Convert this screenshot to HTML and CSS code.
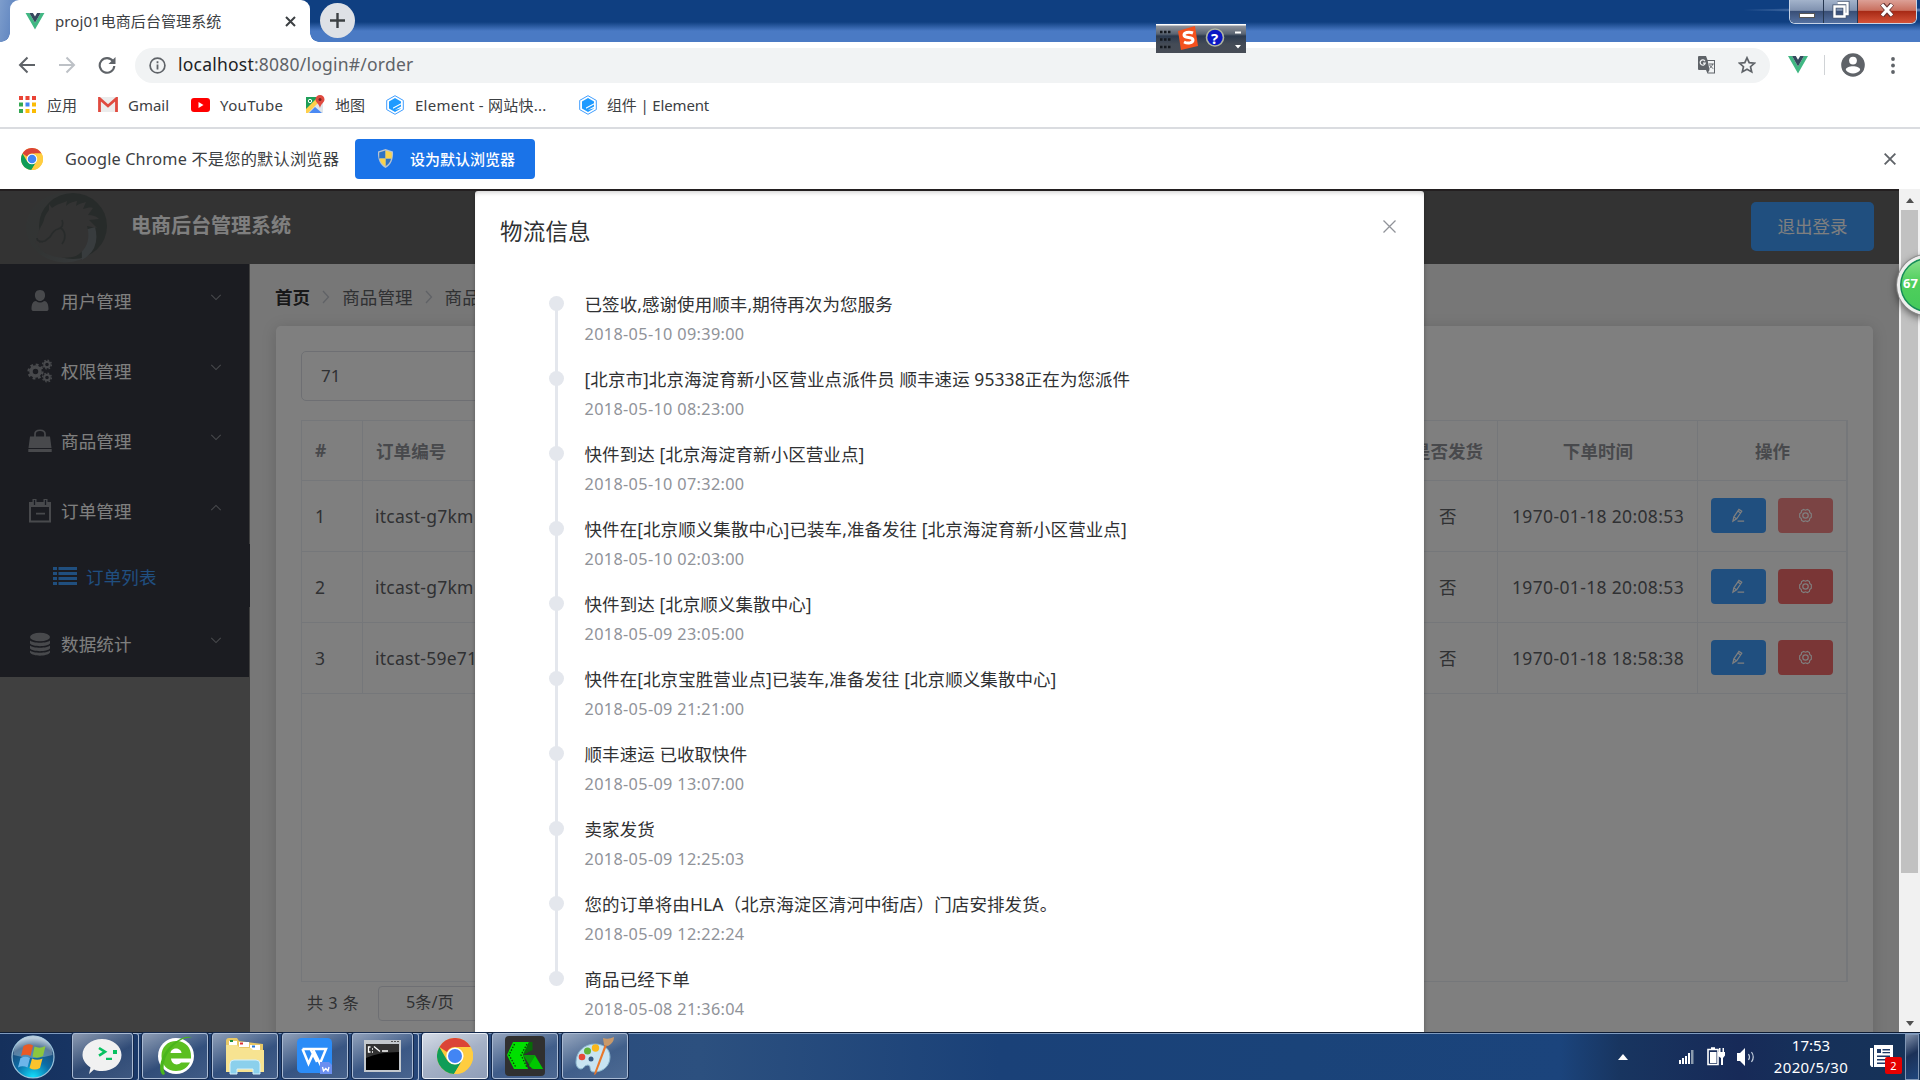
FILE: index.html
```html
<!DOCTYPE html>
<html lang="zh-CN">
<head>
<meta charset="utf-8">
<title>proj01电商后台管理系统</title>
<link rel="stylesheet" href="styles.css">
</head>
<body>
<svg class="defs" aria-hidden="true">
  <defs>
    <symbol id="vue" viewBox="0 0 20 18"><path d="M0 0h4l6 10.4L16 0h4L10 17.5z" fill="#41b883"/><path d="M4 0h3.8L10 3.8 12.2 0H16l-6 10.4z" fill="#35495e"/></symbol>
    <symbol id="chrome" viewBox="0 0 36 36">
      <circle cx="18" cy="18" r="18" fill="#fbc93d"/>
      <path d="M2.4 9A18 18 0 0 1 33.6 9H18a9 9 0 0 0-8 5z" fill="#db4437"/>
      <path d="M2.4 9A18 18 0 0 0 17 36l8-13.5a9 9 0 0 1-15.2-.8z" fill="#0f9d58"/>
      <path d="M33.6 9A18 18 0 0 1 17 36l8.3-13.2A9 9 0 0 0 22 9z" fill="#ffcd40"/>
      <circle cx="18" cy="18" r="8.6" fill="#fff"/><circle cx="18" cy="18" r="7" fill="#4285f4"/>
    </symbol>
    <symbol id="element" viewBox="0 0 18 20"><path d="M9 .7 17.3 5.400v9.200L9 19.300.7 14.600V5.400z" fill="none" stroke="#409eff" stroke-width="1"/><path d="M9 3 15 6.400v1.800L7 12.600v1.200l8-4.400v2l-6.200 3.500 6.200-1.600v.3L9 17 3 13.600V6.400z" fill="#1f9bff"/></symbol>
    <symbol id="down" viewBox="0 0 14 8"><path d="m1.500 1 5.500 5.500L12.500 1" fill="none" stroke="currentColor" stroke-width="1.200"/></symbol>
    <symbol id="right" viewBox="0 0 8 14"><path d="m1 1 5.500 6L1 13" fill="none" stroke="currentColor" stroke-width="1.300"/></symbol>
    <symbol id="edit" viewBox="0 0 16 16"><path d="m3 9.500 5.500-8 3 2-5.500 8L2 14z M7.300 3.300l3 2M3 9.500l3 2M7 14h7" fill="none" stroke="#fff" stroke-width="1.300"/></symbol>
    <symbol id="cog" viewBox="0 0 16 16"><path d="m6 1.500 2 .8 2-.8 2.200 1.300.3 2 1.700 1.400v3.600l-1.700 1.400-.3 2L10 14.500l-2-.8-2 .8-2.200-1.300-.3-2-1.700-1.400V6.200l1.700-1.400.3-2z" fill="none" stroke="#fff" stroke-width="1.200"/><circle cx="8" cy="8" r="2.900" fill="none" stroke="#fff" stroke-width="1.300"/></symbol>
  </defs>
</svg>

<header class="titlebar">
  <div class="tab">
    <svg width="20" height="17"><use href="#vue"/></svg>
    <span class="tab-title">proj01电商后台管理系统</span>
    <svg class="tab-close" width="11" height="11" viewBox="0 0 11 11"><path d="m1 1 9 9m0-9-9 9" stroke="#3c4043" stroke-width="2"/></svg>
  </div>
  <div class="newtab"><svg width="15" height="15" viewBox="0 0 15 15"><path d="M7.500 0v15M0 7.500h15" stroke="#3c4043" stroke-width="2.400"/></svg></div>
  <div class="winbtns">
    <div class="wb min"><i></i></div>
    <div class="wb"><svg width="18" height="18" viewBox="0 0 18 18"><path d="M5.500 2h10v11h-3M2.500 5.500h10v10h-10z" fill="none" stroke="#44546f" stroke-width="4"/><path d="M5.500 2h10v11h-3M2.500 5.500h10v10h-10z" fill="none" stroke="#fff" stroke-width="2.400"/></svg></div>
    <div class="wb close"><svg width="16" height="14" viewBox="0 0 16 14"><path d="m3 1 10 12M13 1 3 13" stroke="#633" stroke-width="5"/><path d="m3 1.500 10 11M13 1.500l-10 11" stroke="#fff" stroke-width="3.200"/></svg></div>
  </div>
</header>
<div class="ime">
  <svg width="90" height="34" viewBox="0 0 90 34"><g fill="none" stroke="#15191f" stroke-width="2.500" stroke-dasharray="2.500 1.500"><path d="M4 10h12M4 17.500h12M4 25h12"/></g><path d="m22 9 17-5 3 20-17 4z" fill="#f4511e"/><path d="M37 11c-5-2-9 0-9 2 0 4 9 1 9 5 0 3-5 4-9 2" fill="none" stroke="#fff" stroke-width="3"/><circle cx="59" cy="15.500" r="8.500" fill="#0b17c4" stroke="#aeb4a0" stroke-width="1.600"/><path d="M79 9.500h6v2h-6zM79 23h6l-3 3.500z" fill="#fff"/></svg><b>?</b>
</div>

<nav class="toolbar">
  <svg class="nav-ic" width="18" height="18" viewBox="0 0 18 18"><path d="M17 9H2m7.500-7.500L2 9l7.500 7.500" fill="none" stroke="#5f6368" stroke-width="2"/></svg>
  <svg class="nav-ic" width="18" height="18" viewBox="0 0 18 18"><path d="M1 9h15M8.500 1.500 16 9l-7.500 7.500" fill="none" stroke="#bdc1c6" stroke-width="2"/></svg>
  <svg class="nav-ic" width="18" height="18" viewBox="0 0 18 18"><path d="M15 5.200A7.300 7.300 0 1 0 16.300 10" fill="none" stroke="#5f6368" stroke-width="2.100"/><path d="M17.500 1v7h-7z" fill="#5f6368"/></svg>
  <div class="urlbar">
    <svg width="17" height="17" viewBox="0 0 17 17"><circle cx="8.500" cy="8.500" r="7.400" fill="none" stroke="#5f6368" stroke-width="1.700"/><path d="M8.500 7.500v5M8.500 4.300v1.900" stroke="#5f6368" stroke-width="1.800"/></svg>
    <span class="url"><b>localhost</b>:8080/login#/order</span>
    <svg class="translate" width="18" height="18" viewBox="0 0 18 18"><path d="M1 0h7l1.500 4H17v13.500h-7.500L8 14H1a1 1 0 0 1-1-1V1a1 1 0 0 1 1-1z" fill="#5f6368"/><path d="M9.800 5h6.200v11.500H10l1.500-2.500z" fill="#f1f3f4"/><path d="M7 5.200a2.600 2.600 0 1 0 .3 2H5" fill="none" stroke="#f1f3f4" stroke-width="1.200"/><path d="M10.800 8h5M14.500 8c0 2-2 3.500-3 4.200m.2-3.200c1 2 2.500 3 3.600 3.500" fill="none" stroke="#5f6368" stroke-width="1"/></svg>
    <svg width="18" height="18" viewBox="0 0 18 18"><path d="m9 1.800 2.200 4.900 5.300.5-4 3.500 1.200 5.200L9 13.200l-4.700 2.700 1.200-5.200-4-3.500 5.300-.5z" fill="none" stroke="#5f6368" stroke-width="1.700"/></svg>
  </div>
  <svg class="vue-ext" width="20" height="18"><use href="#vue"/></svg>
  <i class="vsep"></i>
  <svg class="person" width="24" height="24" viewBox="0 0 24 24"><circle cx="12" cy="12" r="11.800" fill="#5f6368"/><circle cx="12" cy="7.600" r="3.900" fill="#fff"/><path d="M4.800 17c0-5 14.400-5 14.400 0-3 4.500-11.400 4.500-14.400 0z" fill="#fff"/></svg>
  <svg width="4" height="17" viewBox="0 0 4 17"><g fill="#5f6368"><circle cx="2" cy="2" r="1.900"/><circle cx="2" cy="8.500" r="1.900"/><circle cx="2" cy="15" r="1.900"/></g></svg>
</nav>

<div class="bookmarks">
  <a class="bm w1"><svg width="17" height="17" viewBox="0 0 17 17"><path d="M0 0h4v4H0zM6.500 0h4v4h-4zM13 0h4v4h-4z" fill="#ea4335"/><path d="M0 6.500h4v4H0z" fill="#34a853"/><path d="M6.500 6.500h4v4h-4z" fill="#4285f4"/><path d="M13 6.500h4v4h-4zM6.500 13h4v4h-4zM13 13h4v4h-4z" fill="#fbbc04"/><path d="M0 13h4v4H0z" fill="#34a853"/></svg>应用</a>
  <a class="bm w2"><svg width="20" height="15" viewBox="0 0 20 15"><path d="M2 0h16v15H2z" fill="#ececec"/><path d="M1.500 15V1.500L10 9l8.500-7.500V15" fill="none" stroke="#e04a3f" stroke-width="2.800"/></svg>Gmail</a>
  <a class="bm w3"><svg width="19" height="14" viewBox="0 0 19 14"><rect width="19" height="14" rx="3" fill="#f00"/><path d="m7.500 4 5 3-5 3z" fill="#fff"/></svg>YouTube</a>
  <a class="bm w4"><svg width="19" height="19" viewBox="0 0 19 19"><path d="M0 2h17v16H0z" fill="#dfe5ea"/><path d="M0 2h13L0 15z" fill="#1e9e58"/><path d="m0 14 11-11 3 3L2 18H0z" fill="#ffd04b"/><path d="m3 18 6-6 7 6z" fill="#4a89f3"/><path d="M14 0a4.500 4.500 0 0 1 4.500 4.500c0 3-3.500 4-4.500 8.500-1-4.500-4.500-5.500-4.500-8.500A4.500 4.500 0 0 1 14 0z" fill="#e04a3f"/><circle cx="14" cy="4.500" r="1.500" fill="#7b231e"/><circle cx="4" cy="6" r="1.700" fill="none" stroke="#fff"/></svg>地图</a>
  <a class="bm w5"><svg width="18" height="20"><use href="#element"/></svg>Element - 网站快...</a>
  <a class="bm w6"><svg width="18" height="20"><use href="#element"/></svg>组件 | Element</a>
</div>

<div class="infobar">
  <svg width="22" height="22"><use href="#chrome"/></svg>
  <span class="info-text"><span>Google Chrome </span>不是您的默认浏览器</span>
  <button class="default-btn"><svg width="17" height="19" viewBox="0 0 17 19"><path d="M8.500 0 16 2.500C16.500 10 14 16 8.500 19 3 16 .5 10 1 2.500z" fill="#b9c4cf"/><path d="M8.500 1.500V9.500H2.200V3.500zM8.500 9.500h5.600c-.8 3.500-2.600 6-5.600 7.800z" fill="#2f73c4"/><path d="M8.500 1.500V9.500h6.200v-6zM8.500 9.500H2.600c.8 3.500 2.600 6 5.900 7.800z" fill="#f9d34c"/></svg>设为默认浏览器</button>
  <svg class="info-close" width="12" height="12" viewBox="0 0 11 11"><path d="m.6.600 9.800 9.800m0-9.800-9.800 9.800" stroke="#5f6368" stroke-width="1.700"/></svg>
</div>

<div class="viewport">
  <div class="page">
    <div class="app-head">
      <svg class="logo" width="84" height="72" viewBox="0 0 84 72"><defs><linearGradient id="lg" x1="0" x2="1" y1="0" y2="1"><stop offset="0" stop-color="#666a69"/><stop offset=".5" stop-color="#636968"/><stop offset="1" stop-color="#788086"/></linearGradient></defs><ellipse cx="40" cy="36.500" rx="39" ry="35" fill="url(#lg)" opacity=".75"/><ellipse cx="48" cy="35" rx="34" ry="33" fill="#4e5654"/><path d="M57 69Q76 58 70 36L56 40z" fill="#70787c"/><path d="M12 49c0-9 5-14 7-20 1-5 3-7 5-10l0-6 3 4c5-4 11-5 15-7l-1 5c4-4 7-4 11-5l-1 5c4-3 7-3 10-4l-3 7c4-1 7-2 10-1l-5 7c5 0 8 1 11 4l-10 1 8 8-10-2c4 14-1 24-11 30-12 4-34 1-38-12-2 1-4-1-1-4z" fill="#666"/><path d="M37 29c2 5 0 8-4 9s-6 4-8 8l-5 4-6 1M36 37c5 4 5 11 1 16M12 47c0 4 3 3 6 4" fill="none" stroke="#515756" stroke-width="1.700"/></svg>
      <h1>电商后台管理系统</h1>
      <button class="logout">退出登录</button>
    </div>
    <div class="app-body">
      <aside>
        <div class="menu">
          <div class="item"><svg width="26" height="24" viewBox="0 0 26 24"><path d="M13 1c4 0 5.300 3 5 6-.2 2.500-2 5-5 5s-4.800-2.500-5-5c-.3-3 1-6 5-6zM4.500 20c0-5 1.500-8 4.500-8 2.500 2 5.500 2 8 0 3 0 4.500 3 4.500 8 0 1.500-1 2-2 2h-13c-1 0-2-.5-2-2z" fill="#909399"/></svg><span>用户管理</span><svg class="arrow" width="12" height="7"><use href="#down"/></svg></div>
          <div class="item"><svg width="26" height="24" viewBox="0 0 26 24"><g fill="none" stroke="#909399"><circle cx="8.500" cy="12.500" r="4.500" stroke-width="3.500"/><circle cx="8.500" cy="12.500" r="7" stroke-width="2.200" stroke-dasharray="2.800 2.700"/><circle cx="20" cy="5.500" r="2.800" stroke-width="2"/><circle cx="20" cy="5.500" r="4.400" stroke-width="1.300" stroke-dasharray="1.700 1.750"/><circle cx="20" cy="18.500" r="2.800" stroke-width="2"/><circle cx="20" cy="18.500" r="4.400" stroke-width="1.300" stroke-dasharray="1.700 1.750"/></g></svg><span>权限管理</span><svg class="arrow" width="12" height="7"><use href="#down"/></svg></div>
          <div class="item"><svg width="26" height="24" viewBox="0 0 26 24"><path d="M3 7.500h20L24.500 19h-23zM1.300 20h23.400v3H1.300z" fill="#909399"/><path d="M8 11V5c0-5 10-5 10 0v6" fill="none" stroke="#909399" stroke-width="1.700"/></svg><span>商品管理</span><svg class="arrow" width="12" height="7"><use href="#down"/></svg></div>
          <div class="item"><svg width="26" height="24" viewBox="0 0 26 24"><path d="M3 4h20v18.500H3z" fill="none" stroke="#909399" stroke-width="2"/><path d="M2 4h22v4H2zM5.500 0h4v4h-4zM16.500 0h4v4h-4zM9 13.800h9v1.600H9z" fill="#909399"/><path d="M7.500 1v5M18.500 1v5" stroke="#333744" stroke-width="1.300"/></svg><span>订单管理</span><svg class="arrow up" width="12" height="7"><use href="#down"/></svg></div>
          <div class="item sub"><svg width="24" height="18" viewBox="0 0 24 18"><path d="M0 0h4v3H0zM0 5h4v3H0zM0 10h4v3H0zM0 15h4v3H0zM5.500 0H24v3H5.500zM5.500 5H24v3H5.500zM5.500 10H24v3H5.500zM5.500 15H24v3H5.500z" fill="#409eff"/></svg><span>订单列表</span></div>
          <div class="item"><svg width="26" height="24" viewBox="0 0 26 24"><g fill="#909399"><ellipse cx="13" cy="5" rx="10" ry="4.300"/><path d="M3 8.500c3 3 17 3 20 0v3c-3 3.500-17 3.500-20 0zM3 13.500c3 3 17 3 20 0v3c-3 3.500-17 3.500-20 0zM3 18.500c3 3 17 3 20 0v2c-3 4.200-17 4.200-20 0z"/></g></svg><span>数据统计</span><svg class="arrow" width="12" height="7"><use href="#down"/></svg></div>
        </div>
      </aside>
      <main>
        <div class="crumb"><b>首页</b><svg width="8" height="14"><use href="#right"/></svg><span>商品管理</span><svg width="8" height="14"><use href="#right"/></svg><span>商品</span></div>
        <div class="card">
          <div class="search">71</div>
          <div class="table-wrap">
            <table>
              <colgroup><col class="c-idx"><col><col class="c-sent"><col class="c-time"><col class="c-op"></colgroup>
              <tr><th class="l">#</th><th class="l">订单编号</th><th>是否发货</th><th>下单时间</th><th>操作</th></tr>
              <tr><td class="l">1</td><td class="l id">itcast-g7km</td><td>否</td><td>1970-01-18 20:08:53</td><td><div class="ops"><i class="btn"><svg width="15" height="15"><use href="#edit"/></svg></i><i class="btn red hover"><svg width="15" height="15"><use href="#cog"/></svg></i></div></td></tr>
              <tr><td class="l">2</td><td class="l id">itcast-g7km</td><td>否</td><td>1970-01-18 20:08:53</td><td><div class="ops"><i class="btn"><svg width="15" height="15"><use href="#edit"/></svg></i><i class="btn red"><svg width="15" height="15"><use href="#cog"/></svg></i></div></td></tr>
              <tr><td class="l">3</td><td class="l id">itcast-59e71</td><td>否</td><td>1970-01-18 18:58:38</td><td><div class="ops"><i class="btn"><svg width="15" height="15"><use href="#edit"/></svg></i><i class="btn red"><svg width="15" height="15"><use href="#cog"/></svg></i></div></td></tr>
            </table>
          </div>
          <div class="pager"><span>共 3 条</span><div class="size">5条/页</div></div>
        </div>
      </main>
    </div>
    <div class="mask">
      <section class="dialog">
        <div class="dlg-head"><h2>物流信息</h2><svg width="13" height="13" viewBox="0 0 13 13"><path d="m.5.500 12 12m0-12-12 12" stroke="#909399" stroke-width="1.300"/></svg></div>
        <ul class="timeline">
          <li><p>已签收,感谢使用顺丰,期待再次为您服务</p><time>2018-05-10 09:39:00</time></li>
          <li><p>[北京市]北京海淀育新小区营业点派件员 顺丰速运 95338正在为您派件</p><time>2018-05-10 08:23:00</time></li>
          <li><p>快件到达 [北京海淀育新小区营业点]</p><time>2018-05-10 07:32:00</time></li>
          <li><p>快件在[北京顺义集散中心]已装车,准备发往 [北京海淀育新小区营业点]</p><time>2018-05-10 02:03:00</time></li>
          <li><p>快件到达 [北京顺义集散中心]</p><time>2018-05-09 23:05:00</time></li>
          <li><p>快件在[北京宝胜营业点]已装车,准备发往 [北京顺义集散中心]</p><time>2018-05-09 21:21:00</time></li>
          <li><p>顺丰速运 已收取快件</p><time>2018-05-09 13:07:00</time></li>
          <li><p>卖家发货</p><time>2018-05-09 12:25:03</time></li>
          <li><p>您的订单将由HLA（北京海淀区清河中街店）门店安排发货。</p><time>2018-05-09 12:22:24</time></li>
          <li><p>商品已经下单</p><time>2018-05-08 21:36:04</time></li>
        </ul>
      </section>
    </div>
  </div>
  <div class="scrollbar"><i class="tri up"></i><i class="thumb"></i><i class="tri"></i></div>
  <div class="ball">67</div>
</div>

<footer class="taskbar">
  <div class="orb"><svg width="46" height="46" viewBox="0 0 46 46"><defs><radialGradient id="og" cx=".5" cy="1" r=".95"><stop offset="0" stop-color="#13e4ff"/><stop offset=".45" stop-color="#0b6ea8"/><stop offset=".8" stop-color="#1d4a78"/><stop offset="1" stop-color="#9fb9cf"/></radialGradient></defs><circle cx="23" cy="23" r="21" fill="url(#og)" stroke="#9cc5dd" stroke-width="1.200"/><path d="M3.500 21a19.500 19.500 0 0 1 39 0q-19 6-39 0z" fill="#fff" opacity=".28"/><path d="M13.500 12q5-3 9.500-.5L20.500 22q-5-2.500-9.500 0z" fill="#ea5a25"/><path d="M24.500 12.500q5 2.500 11-.500L33 22q-6 3-10.500.5z" fill="#8cc63f"/><path d="M10.500 24q5-2.500 9.500 0l-2.500 9.500q-5-2.500-9.500 0z" fill="#6cb5ea"/><path d="M22 24.500q5 2.500 10.500 0L30 34q-5.500 3-10.500 0z" fill="#fcc32c"/></svg></div>
  <div class="task multi"><svg width="40" height="38" viewBox="0 0 40 38"><path d="M20 2c11 0 19.500 7 19.500 16S31 34 20 34c-3 0-6-.5-8-1.500L7 37l1.500-6.500C4 27.500.5 23 .5 18 .5 9 9 2 20 2z" fill="#f1f1f1"/><path d="m17 11 6 3.800-6 3.800" fill="none" stroke="#07c160" stroke-width="2.600"/><path d="M24 20.800h6v2.200h-6zM31 13h4v4h-4z" fill="#07c160"/></svg></div>
  <div class="task"><svg width="38" height="40" viewBox="0 0 38 40"><circle cx="20" cy="20" r="18" fill="#fff"/><path d="M35 20.500c.5-8.500-5.500-15.500-14.500-15.500S5.500 11 5.500 20s6 15 14.500 15c6.500 0 11.500-3.300 14-8.500h-9c-4 4-9.500 1.500-10-4h20z" fill="#5bbf21"/><path d="M14.500 17h11c-.5-6-10.500-6-11 0z" fill="#fff"/><path d="M7 39C0 34 6 15 19 6 26 1 33-.5 36 1.500c-6-.5-11 1.500-16 6C10 16 5 29 9 38z" fill="#49b51c"/></svg></div>
  <div class="task"><svg width="40" height="38" viewBox="0 0 40 38"><path d="M1 4q0-3 3-3h8l2 3 24 3v27H1z" fill="#e8c866"/><path d="M4 4h8v5H4zM14 5h10v5H14zM25 8h10v6H25z" fill="#fff"/><path d="M5 3h3v2H5z" fill="#1c8d3b"/><path d="M15 5.500h3v2h-3z" fill="#d33"/><path d="M27 8.500h3v2h-3z" fill="#2277d8"/><path d="M1 8h11l3 3h11l2 2h11v22H1z" fill="#f7e391"/><path d="M5 37V27q0-4 4-4h22q4 0 4 4v10h-7v-5H12v5z" fill="#8bd0ec" stroke="#d5f0fa" stroke-width="1"/></svg></div>
  <div class="task"><svg width="36" height="38" viewBox="0 0 36 38"><rect y="1" width="35" height="35" rx="4.500" fill="#2b8cf7"/><path d="M5.500 12H29L23 26.500l-6-12-5.500 12L5.500 12m8 0L20 25" fill="none" stroke="#fff" stroke-width="2.500"/><path d="M23 25h9l3 3v9H23z" fill="#6b8ff0"/><path d="m25.500 30 1 4 2.300-2.500L31 34l1-4" fill="none" stroke="#fff" stroke-width="1.300"/></svg></div>
  <div class="task multi"><svg width="37" height="32" viewBox="0 0 37 32"><path d="M0 0h37v32H0z" fill="#c3c8cd"/><path d="M2 4h33v26H2z" fill="#000"/><path d="M2 4h33v8Q14 12 2 18z" fill="#333"/><path d="M18 11h6M10 6.500l6 5M8 9h1M8 12h1M6.500 7H4.500v5h2" fill="none" stroke="#fff" stroke-width="1.300"/><path d="M27 1h2v1h-2zM30 1h2v1h-2zM33 1h2v1h-2z" fill="#555"/></svg></div>
  <div class="task active"><svg width="36" height="36"><use href="#chrome"/></svg></div>
  <div class="task"><svg width="40" height="40" viewBox="0 0 40 40"><rect width="40" height="40" rx="4" fill="#303030"/><path d="m8 6 16 0-6 13 5 14H9L2 19z" fill="#00e000"/><path d="M24 6h3.500v8L18 19z" fill="#076c07"/><path d="m18 19 12 0 8 14H27z" fill="#0a9a0a"/><path d="m30 20 8 13h-9l-5-3z" fill="#00c800"/><path d="M9.500 8 4 19l7 12.500M22 8l-6 11 6 12.500" fill="none" stroke="#063e06" stroke-width="1.300" stroke-dasharray="1.500 1.500"/></svg></div>
  <div class="task"><svg width="40" height="38" viewBox="0 0 40 38"><path d="M1 25C1 14 10 7 20 7c9 0 15 5 15 13 0 9-7 15-16 15-6 0-2-6-6-7-4 0-4 4-7 4-3 0-5-3-5-7z" fill="#c8e4f2" stroke="#88b4cc"/><circle cx="7" cy="20" r="3.300" fill="#e5493a"/><circle cx="12.500" cy="14" r="3.500" fill="#5fb23a"/><circle cx="20.500" cy="11" r="3.700" fill="#fbb71b"/><circle cx="16" cy="22" r="2.500" fill="#365983"/><path d="M32 8 21 37l-2 1 1-4L30 7z" fill="#e8772a"/><path d="M28 1q5 2 11-1 0 6-6 9l-4-1z" fill="#c8996a"/></svg></div>
  <div class="tray">
    <svg class="caret" width="10" height="6" viewBox="0 0 10 6"><path d="M0 6 5 0l5 6z" fill="#fff"/></svg>
    <svg class="sig" width="16" height="14" viewBox="0 0 16 14"><path d="M0 10h2v4H0zM3 8h2v6H3zM6 6h2v8H6zM9 3h2v11H9z" fill="#fff"/><path d="M12 0h2.500v14H12z" fill="#8b9aad"/></svg>
    <svg class="bat" width="19" height="19" viewBox="0 0 19 19"><path d="M1 2.500h10v15H1zM4 1h4" fill="none" stroke="#fff" stroke-width="1.600"/><path d="M3 5h6.500v11H3zM11 5h7v3.500l-2 2.500v7h-2v-7l-3-2zM12 1h1.500v4H12zM15.500 1H17v4h-1.500z" fill="#fff"/></svg>
    <svg class="vol" width="19" height="18" viewBox="0 0 19 18"><path d="M0 5h3l5-5v18l-5-5H0z" fill="#fff"/><path d="M11.500 6q2 3 0 6M14.500 4q3.500 5 0 10" fill="none" stroke="#c5d0df" stroke-width="1.200"/></svg>
    <div class="clock"><span>17:53</span><span class="date">2020/5/30</span></div>
    <div class="news"><svg width="24" height="23" viewBox="0 0 24 23"><path d="M4 0h19v22H4zM0 3h3v19H1.500L0 20z" fill="#fff"/><path d="M7 4h4v4H7zM12.500 4H20v1.500h-7.500zM12.500 7H20v1.200h-7.500zM7 10.500h13V12H7zM7 14h13v1.500H7zM7 17.500h13V19H7z" fill="#1e3a68"/></svg><b>2</b></div>
    <div class="peek"></div>
  </div>
</footer>
</body>
</html>
```
FILE: styles.css
```css
* { box-sizing: border-box; }
body {
  margin: 0; width: 1920px; height: 1080px; overflow: hidden; position: relative;
  display: flex; flex-direction: column; background: #fff;
  font-family: "Noto Sans", "Noto Sans CJK SC", sans-serif; font-size: 17.5px; color: #303133;
}
svg { flex: none; display: block; }
h1, h2, p, ul { margin: 0; padding: 0; }
button { border: 0; font-family: inherit; }
.defs { position: absolute; width: 0; height: 0; }

/* browser window */
.titlebar {
  height: 42px; flex: none; display: flex; position: relative; padding-left: 10px;
  background: linear-gradient(100deg, #7d9dcc 0, #5d83bf 20px, transparent 60px), radial-gradient(ellipse at 1870px 10px, #8eaad4 0, transparent 130px), linear-gradient(#0f3f81 0, #0f3f81 22px, #4a7ac4 31px, #4a7ac4);
}
.tab { width: 300px; height: 42px; background: #fff; border-radius: 9px 9px 0 0; display: flex; align-items: center; padding: 0 14px 0 15px; position: relative; }
.tab::before, .tab::after { content: ""; position: absolute; bottom: 0; width: 9px; height: 9px; }
.tab::before { left: -9px; background: radial-gradient(circle at 0 0, transparent 8.500px, #fff 9px); }
.tab::after { right: -9px; background: radial-gradient(circle at 100% 0, transparent 8.500px, #fff 9px); }
.tab-title { margin-left: 10px; padding-bottom: 2px; font-size: 15px; letter-spacing: .08px; color: #3c4043; flex: 1; white-space: nowrap; }
.newtab { width: 35px; height: 35px; border-radius: 50%; background: #dee1e6; margin: 3px 0 0 10px; display: flex; align-items: center; justify-content: center; }
.winbtns { display: flex; margin-left: auto; margin-right: 3px; width: 128px; height: 24px; border: 1px solid #c6d3e6; border-top: 0; border-radius: 0 0 6px 6px; overflow: hidden; box-shadow: inset 0 -1px #1d2a40, inset 1px 0 #1d2a40; }
.wb { width: 34px; display: flex; align-items: center; justify-content: center; border-right: 1px solid #25364f; background: linear-gradient(#a3b3cb 0, #8092b0 45%, #394f77 50%, #5571a0); }
.wb svg { margin-top: -4px; }
.wb.min i { width: 16px; height: 5px; background: #fff; border: 1px solid #555; margin-top: 7px; }
.wb.close { flex: 1; border: 0; background: linear-gradient(#dca096 0, #c9705f 45%, #a82a16 50%, #d45238); }
.ime { position: absolute; left: 1156px; top: 24px; width: 90px; height: 29px; background: linear-gradient(#fff 0, #fff 1px, #8d929b 2px, #5a6472 10px, #2c3a4e 12px, #444b56 20px, #474c56); z-index: 3; overflow: hidden; }
.ime svg { margin-top: -2px; }
.ime b { position: absolute; left: 55px; top: 4px; color: #fff; font-size: 15px; line-height: 20px; }
.toolbar { height: 44px; flex: none; display: flex; align-items: center; padding: 2px 25px 0 18px; }
.nav-ic { margin-right: 22px; }
.urlbar { flex: 1; height: 35px; border-radius: 18px; background: #f1f3f4; display: flex; align-items: center; padding: 0 14px 0 14px; margin-left: -3px; }
.url { margin-left: 12px; color: #5f6368; font-size: 17.500px; flex: 1; line-height: 33px; padding-bottom: 2px; letter-spacing: .22px; }
.url b { font-weight: 400; color: #202124; }
.translate { margin-right: 22px; }
.vue-ext { margin-left: 18px; }
.vsep { width: 1px; height: 20px; background: #d0d3d6; margin: 0 16px; }
.person { margin-right: 26px; }
.bookmarks { height: 43px; flex: none; display: flex; align-items: center; border-bottom: 2px solid #dadce0; padding: 0 0 4px 19px; font-size: 15px; color: #3c4043; }
.bm { display: flex; align-items: center; gap: 10px; white-space: nowrap; }
.w1 { width: 79px; gap: 11px; } .w2 { width: 93px; } .w3 { width: 115px; letter-spacing: .4px; } .w4 { width: 80px; } .w5 { width: 193px; gap: 11px; letter-spacing: .25px; } .w6 { letter-spacing: -.15px; }
.infobar { height: 60px; flex: none; display: flex; align-items: center; padding: 0 24px 0 21px; font-size: 16.250px; color: #3c4043; }
.info-text { width: 290px; margin-left: 22px; white-space: nowrap; letter-spacing: .16px; padding-bottom: 2px; }
.default-btn { width: 180px; height: 40px; border-radius: 4px; background: #1a73e8; color: #fff; font-size: 15px; font-weight: 500; display: flex; align-items: center; justify-content: center; gap: 16px; padding: 0 0 2px 2px; }
.info-close { margin-left: auto; }

/* page area */
.viewport { height: 843px; flex: none; display: flex; position: relative; overflow: hidden; }
.page { width: 1899px; position: relative; display: flex; flex-direction: column; background: #eee; overflow: hidden; }
.app-head { height: 75px; flex: none; background: #666; display: flex; align-items: center; padding: 0 25px; }
.logo { margin-top: 1px; }
.app-head h1 { margin-left: 22px; font-size: 20px; line-height: 30px; color: #fff; font-weight: 700; position: relative; top: -1px; }
.logout { margin-left: auto; width: 123px; height: 49px; border-radius: 5px; background: #409eff; color: #fff; font-size: 17.500px; padding: 0 0 3px; }
.app-body { flex: 1; display: flex; }
aside { width: 250px; background: #808080; flex: none; }
.menu { width: 249px; }
.item { height: 70px; padding: 0 27px 0 27px; display: flex; align-items: center; background: #363842; color: #fff; }
.item span { margin: 3px 0 0 8px; flex: 1; letter-spacing: .15px; }
.item > svg:first-child { margin-top: 3px; }
.arrow { color: #909399; margin-top: -3px; }
.arrow.up { transform: scaleY(-1); }
.item.sub { width: 250px; height: 63px; padding-left: 53px; color: #409eff; }
.item.sub span { margin-left: 9px; margin-top: 2px; }
.item.sub > svg:first-child { margin-top: 0; }
main { flex: 1; padding: 19px 26px 0; }
.crumb { height: 28px; line-height: 28px; display: flex; align-items: center; color: #606266; margin-left: -1px; letter-spacing: .1px; }
.crumb svg { margin: 0 12px; color: #c0c4cc; }
.crumb b { color: #303133; }
.card { margin-top: 15px; height: 760px; background: #fff; border-radius: 5px; box-shadow: 0 2px 15px rgba(0, 0, 0, .15); padding: 25px; }
.search { width: 500px; height: 50px; border: 1px solid #dcdfe6; border-radius: 5px; padding: 0 19px; line-height: 47px; color: #606266; font-size: 17px; }
.table-wrap { margin-top: 19px; height: 562px; border: 1px solid #ebeef5; border-right-width: 2px; }
table { width: 100%; table-layout: fixed; border-spacing: 0; color: #606266; }
.c-idx { width: 61px; } .c-sent { width: 100px; } .c-time { width: 200px; } .c-op { width: 148px; }
th, td { padding: 0 12px 1px 13px; height: 71px; text-align: center; border: solid #ebeef5; border-width: 0 1px 1px 0; white-space: nowrap; letter-spacing: .35px; }
th:last-child, td:last-child { border-right: 0; }
th { height: 60px; color: #909399; letter-spacing: .1px; }
.l { text-align: left; }
.id { letter-spacing: .25px; padding-left: 12px; }
.ops { display: flex; gap: 12px; width: 122px; }
.btn { width: 55px; height: 35px; border-radius: 4px; background: #409eff; display: flex; align-items: center; justify-content: center; }
.red { background: #f56c6c; }
.hover { background: #f78989; }
.pager { margin-top: 3px; display: flex; align-items: center; font-size: 16.250px; color: #606266; padding-left: 6px; height: 36px; }
.pager span { width: 71px; letter-spacing: .4px; padding-bottom: 2px; }
.size { width: 137px; height: 35px; border: 1px solid #dcdfe6; border-radius: 4px; padding-left: 27px; line-height: 31px; }
.mask { position: absolute; inset: 0; background: rgba(0, 0, 0, .5); }
.dialog { position: absolute; left: 475px; top: 2px; width: 949px; height: 860px; background: #fff; border-radius: 3px; box-shadow: 0 1px 4px rgba(0, 0, 0, .3), inset 0 4px 5px -3px rgba(0, 0, 0, .22); padding: 0 28px 0 25px; }
.dlg-head { height: 80px; display: flex; justify-content: space-between; align-items: center; }
.dlg-head svg { margin-top: -9px; }
h2 { font-size: 22.500px; font-weight: 400; line-height: 30px; color: #303133; padding-top: 2px; letter-spacing: .2px; }
.timeline { list-style: none; padding: 25px 0 0 49px; }
.timeline li { height: 75px; padding-left: 35.500px; position: relative; }
.timeline li::before { content: ""; position: absolute; left: 0; top: 0; width: 15px; height: 15px; border-radius: 50%; background: #e4e7ed; z-index: 1; }
.timeline li:not(:last-child)::after { content: ""; position: absolute; left: 6px; top: 7px; width: 2.500px; height: 75px; background: #e4e7ed; }
.timeline p { line-height: 26px; position: relative; top: -5px; white-space: nowrap; letter-spacing: .07px; }
.timeline time { display: block; font-size: 16.250px; line-height: 22px; color: #909399; letter-spacing: .34px; margin-top: 1px; }
.scrollbar { width: 21px; background: #f1f1f1; display: flex; flex-direction: column; align-items: center; padding: 9px 0 6px; }
.tri { border: 4.500px solid transparent; border-top: 5px solid #505050; border-bottom: 0; margin-top: auto; }
.tri.up { border-top: 0; border-bottom: 5px solid #505050; margin: 0 0 7px; }
.thumb { width: 17px; height: 663px; background: #c1c1c1; }
.ball { position: absolute; left: 1897px; top: 66px; width: 60px; height: 60px; border-radius: 50%; border: 3px solid #eee; background: linear-gradient(#8be08f, #4fcf5c 45%, #44c95a); box-shadow: inset 0 0 0 1.500px #168a5b, 0 0 1px 1px #888, 0 3px 8px rgba(0, 0, 0, .6); color: #fff; font: 700 13px/50px "Noto Sans", sans-serif; padding-left: 3px; }
.viewport::before { content: ""; position: absolute; left: 0; top: 0; width: 1899px; height: 2px; background: #231f20; z-index: 2; }

/* desktop taskbar */
.taskbar { height: 48px; flex: none; display: flex; align-items: stretch; gap: 4px; padding: 0; border-top: 1px solid #0e1c33; box-shadow: inset 0 1px #7f9bc0; background: linear-gradient(90deg, #15305c 0, #1c3d70 220px, #2a4a7c 500px, #2c507f 700px, #1a4178 1000px, #1a4379 1300px, #1b447c 1560px, #183560 1620px, #172a58 1740px, #16305a 1800px, #163358); }
.orb { width: 68px; flex: none; padding-left: 10px; display: flex; align-items: center; }
.task { width: 66px; height: 46px; flex: none; border: 1px solid #a9bad3; border-radius: 3px; display: flex; align-items: center; justify-content: center; box-shadow: 0 0 0 1px #14294d; background: linear-gradient(155deg, rgba(255, 255, 255, .5) 0, rgba(255, 255, 255, .25) 35%, rgba(255, 255, 255, .1) 55%, rgba(255, 255, 255, .16)); position: relative; }
.task.multi { width: 61px; margin-right: 5px; }
.task.multi svg { margin-right: 1px; }
.task.multi::after { content: ""; position: absolute; left: 60px; top: -1px; width: 5px; height: 46px; border: 1px solid #a9bad3; border-left: 0; border-radius: 0 3px 3px 0; }
.task.active { background: linear-gradient(155deg, #d4dbe6 0, #a5b1c6 50%, #8e9db8); border-color: #e9eef5; }
.tray { margin-left: auto; display: flex; align-items: center; color: #fff; padding-right: 1px; }
.caret { margin-right: 51px; } .sig { margin-right: 12px; } .bat { margin-right: 11px; } .vol { margin-right: 11px; }
.clock { width: 88px; display: flex; flex-direction: column; align-items: center; font-size: 15px; line-height: 22px; padding-bottom: 1px; }
.date { letter-spacing: .35px; }
.news { width: 24px; margin: 0 11px 0 15px; position: relative; }
.news b { position: absolute; left: 15px; top: 12px; width: 17px; height: 17px; border-radius: 2px; background: #e60000; font: 400 11px/17px "Noto Sans", sans-serif; text-align: center; }
.peek { width: 14px; height: 46px; border: 1px solid #8096b5; background: linear-gradient(150deg, #8191ab, #1b3158 45%, #20467c); }
```
